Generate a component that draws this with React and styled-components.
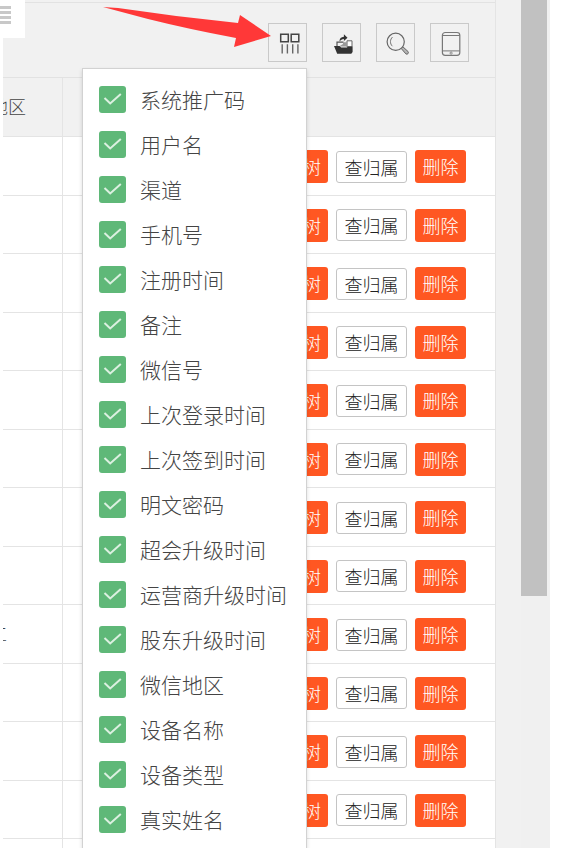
import React from 'react';
import styled, { createGlobalStyle } from 'styled-components';

const GlobalStyle = createGlobalStyle`
  * { box-sizing: border-box; }
  html, body { margin: 0; overflow: hidden; background: #fff; }
  body { font-family: "Noto Sans CJK SC", "Liberation Sans", sans-serif; font-weight: 300; }
`;

const Page = styled.div`
  position: relative;
  display: flex;
  width: 570px;
  height: 848px;
  padding-left: 3px;
  overflow: hidden;
  background: #fff;
`;

const TablePanel = styled.main`
  width: 493px;
  height: 848px;
  padding-top: 2px;
  overflow: hidden;
  background: #f1f1f1;
  border-right: 1px solid #e4e4e4;
`;

const Toolbar = styled.div`
  display: flex;
  justify-content: flex-end;
  gap: 15px;
  height: 76px;
  padding: 20px 26px 0 0;
  border-top: 1px solid #e2e2e2;
  border-bottom: 1px solid #e2e2e2;
`;

const ToolButton = styled.button`
  display: flex;
  width: 39px;
  height: 39px;
  padding: 0;
  background: #f1f1f1;
  border: 1px solid #c9c9c9;

  svg { display: block; width: 37px; height: 37px; }
`;

const HeaderRow = styled.div`
  display: grid;
  grid-template-columns: 60px 1fr;
  height: 59px;
  border-bottom: 1px solid #e4e4e4;
`;

const BodyRow = styled.div`
  display: grid;
  grid-template-columns: 60px 1fr;
  height: 58.5px;
  background: #fff;
  border-bottom: 1px solid #e4e4e4;
`;

const RegionCell = styled.div`
  display: flex;
  align-items: center;
  overflow: hidden;
  padding-bottom: 2px;
  white-space: nowrap;
  border-right: 1px solid #e4e4e4;
  color: #444;
  font-size: 18px;

  span { margin-left: ${(p) => p.$shift}px; }
`;

const ActionCell = styled.div`
  display: flex;
  align-items: center;
  justify-content: flex-end;
  gap: 8px;
  padding-right: 29px;
  padding-top: 2px;
`;

const ActionButton = styled.button`
  width: ${(p) => (p.$outline ? 71 : 51)}px;
  height: ${(p) => (p.$outline ? 32 : 33)}px;
  padding: 0 7px;
  border: ${(p) => (p.$outline ? '1px solid #c4c4c4' : '0')};
  border-radius: 3px;
  background: ${(p) => (p.$outline ? '#fff' : '#ff5722')};
  color: ${(p) => (p.$outline ? '#222' : '#fff')};
  font: inherit;
  font-size: 18px;
  line-height: 31px;
  text-align: ${(p) => (p.$alignEnd ? 'right' : 'center')};
  white-space: nowrap;
`;

const PageMargin = styled.div`
  width: 25px;
  background: #f1f1f1;
`;

const ScrollTrack = styled.div`
  width: 29px;
  background: #f0f0f0;
`;

const ScrollThumb = styled.div`
  width: 26px;
  height: 596px;
  background: #c1c1c1;
`;

const CornerToggle = styled.div`
  position: absolute;
  top: 0;
  left: 0;
  display: flex;
  flex-direction: column;
  gap: 2px;
  width: 25px;
  height: 38px;
  padding-top: 6px;
  background: #fff;
`;

const ToggleBar = styled.i`
  width: 11px;
  height: 3px;
  background: #c8c8c8;
`;

const ColumnMenu = styled.div`
  position: absolute;
  top: 68px;
  left: 82px;
  width: 225px;
  height: 800px;
  padding: 8px 0 0 16px;
  background: #fff;
  border: 1px solid #d2d2d2;
  box-shadow: 0 2px 4px rgba(0, 0, 0, 0.14);
`;

const MenuItem = styled.label`
  display: flex;
  align-items: center;
  gap: 14px;
  height: 45px;
  color: #444;
  font-size: 21px;
  line-height: 45px;
  white-space: nowrap;
`;

const CheckMark = styled.span`
  flex: none;
  width: 27px;
  height: 27px;
  border-radius: 3px;
  background: #5fb878;

  svg { display: block; }
`;

const MenuText = styled.span`
  padding-bottom: 1px;
`;

const Pointer = styled.svg`
  position: absolute;
  top: 0;
  left: 98px;
`;

const fields = [
  '系统推广码', '用户名', '渠道', '手机号', '注册时间', '备注', '微信号',
  '上次登录时间', '上次签到时间', '明文密码', '超会升级时间', '运营商升级时间',
  '股东升级时间', '微信地区', '设备名称', '设备类型', '真实姓名',
];

const rows = Array.from({ length: 13 }, (_, i) => (i === 8 ? '工' : ''));

const ColumnsIcon = () => (
  <svg viewBox="0 0 37 37" fill="none" stroke="#444">
    <path d="M11.7 10.2h7.6v7.6h-7.6zM22.2 10.2h7.6v7.6h-7.6z" strokeWidth="1.5" />
    <path d="M13.2 20.3v9.2M18.4 20.3v9.2M23.7 20.3v9.2M28.9 20.3v9.2" strokeWidth="1.4" stroke="#666" />
  </svg>
);

const ExportIcon = () => (
  <svg viewBox="0 0 37 37">
    <path d="M14 22.5v-4.3h6.5" fill="none" stroke="#555" strokeWidth="1.2" />
    <path d="M24 16.8h5v6h-5z" fill="#fff" stroke="#666" strokeWidth="1" />
    <path d="M20 18.2h4v4.3h-8l4-2.5z" fill="#999" />
    <path d="M16.5 17.6c-.2-3 1.6-4.8 4.4-4.9v-2.4l3.6 3.5-3.6 3.3v-2.2c-1.8 0-3.2.9-4.4 2.7z" fill="#333" />
    <path d="M11 22h5.5l1.7 1.4H24l1-.9h4.6v5.4l-1.3 1.8H14.2z" fill="#333" />
  </svg>
);

const SearchIcon = () => (
  <svg viewBox="0 0 37 37" fill="none" stroke="#666">
    <circle cx="18.7" cy="17.8" r="8.6" strokeWidth="1.2" />
    <path d="M15.4 22.2c-2.7-2.4-2.5-7 .2-9.2" strokeWidth=".9" />
    <path d="M24.3 24.6l1.6-1.8 5.2 4.8c1 1.6-.7 3.3-2.2 2.3z" fill="#b5b5b5" strokeWidth="1" />
  </svg>
);

const TabletIcon = () => (
  <svg viewBox="0 0 37 37" fill="none" stroke="#777">
    <rect x="11.4" y="8.5" width="17.4" height="22.8" rx="2.8" strokeWidth="1.2" />
    <path d="M11.5 11.5h17.2M11.5 26.9h17.2" strokeWidth="1" />
    <circle cx="20.1" cy="29.1" r="1.1" strokeWidth=".8" />
  </svg>
);

export default function App() {
  return (
    <>
      <GlobalStyle />
      <Page>
        <TablePanel>
          <Toolbar>
            <ToolButton aria-label="筛选列"><ColumnsIcon /></ToolButton>
            <ToolButton aria-label="导出"><ExportIcon /></ToolButton>
            <ToolButton aria-label="搜索"><SearchIcon /></ToolButton>
            <ToolButton aria-label="设备"><TabletIcon /></ToolButton>
          </Toolbar>
          <HeaderRow>
            <RegionCell $shift={-13}><span>地区</span></RegionCell>
          </HeaderRow>
          {rows.map((region, i) => (
            <BodyRow key={i}>
              <RegionCell $shift={-14}><span>{region}</span></RegionCell>
              <ActionCell>
                <ActionButton $alignEnd>树</ActionButton>
                <ActionButton $outline>查归属</ActionButton>
                <ActionButton>删除</ActionButton>
              </ActionCell>
            </BodyRow>
          ))}
        </TablePanel>
        <PageMargin />
        <ScrollTrack><ScrollThumb /></ScrollTrack>

        <CornerToggle>
          <ToggleBar /><ToggleBar /><ToggleBar /><ToggleBar />
        </CornerToggle>
        <ColumnMenu>
          {fields.map((name) => (
            <MenuItem key={name}>
              <CheckMark>
                <svg width="27" height="27" viewBox="0 0 27 27">
                  <path d="M5.5 12l5.7 5.5L21.8 8" fill="none" stroke="#dcf0e1" strokeWidth="2" />
                </svg>
              </CheckMark>
              <MenuText>{name}</MenuText>
            </MenuItem>
          ))}
        </ColumnMenu>
        <Pointer width="174" height="50" viewBox="0 0 174 50">
          <path d="M5 7L20 8Q80 17 140 23L142 15L173 36L136 47L138 38Q90 29 50 19Z" fill="#ff3838" />
        </Pointer>
      </Page>
    </>
  );
}
